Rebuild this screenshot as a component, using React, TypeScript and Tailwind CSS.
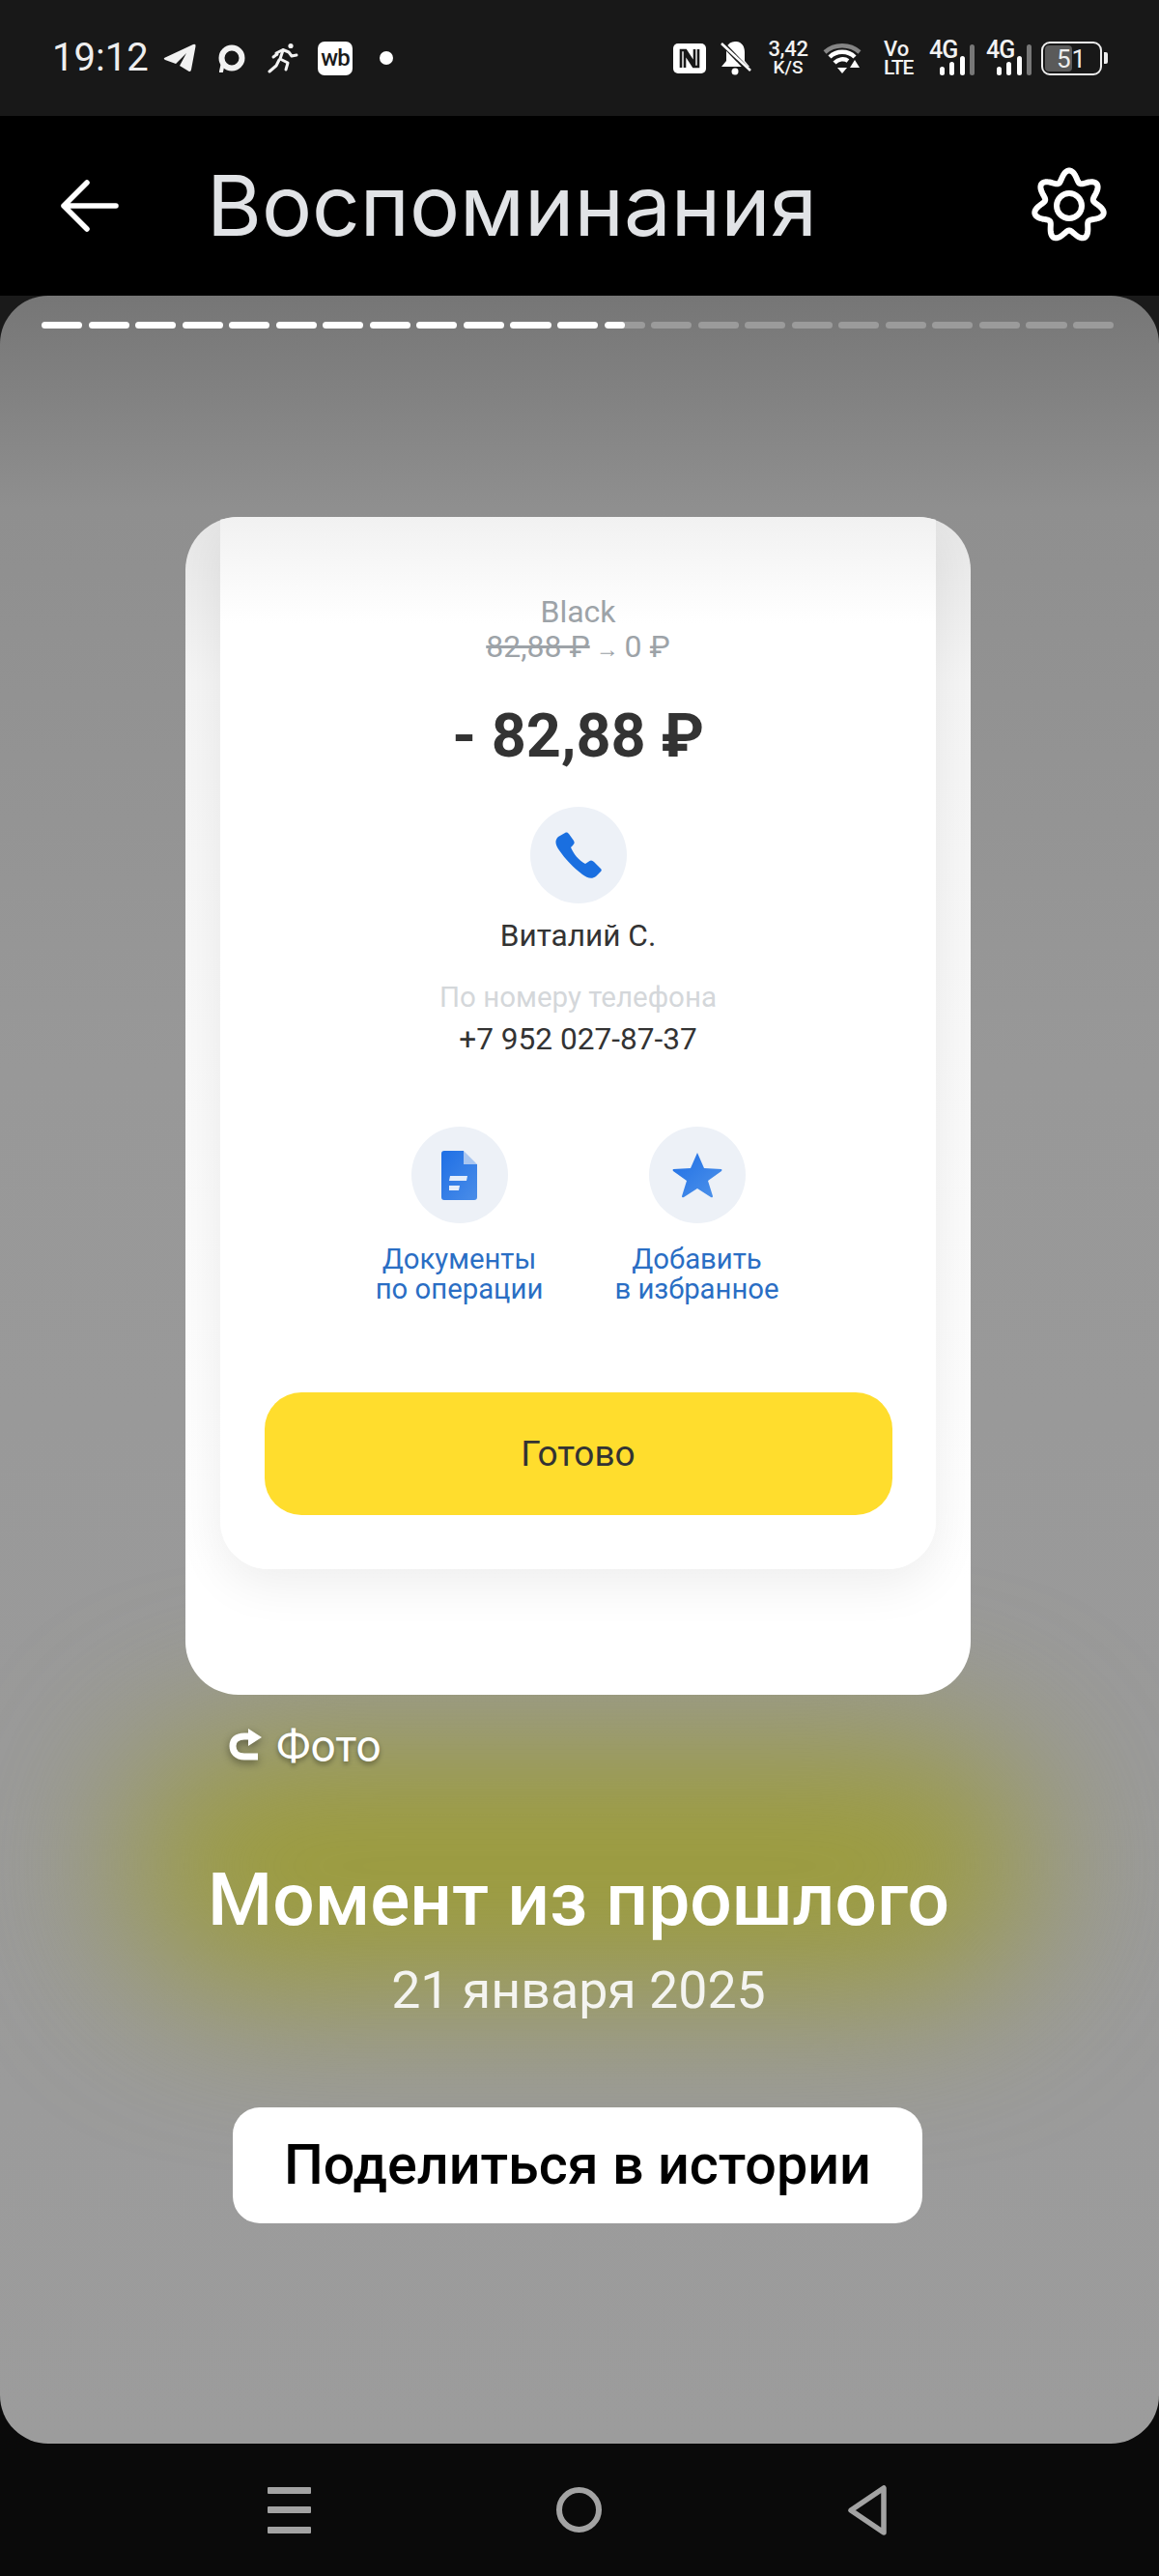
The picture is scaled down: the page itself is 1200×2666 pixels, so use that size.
import React from "react";

const segments = Array.from({ length: 23 }, (_, i) => i);

// 7 lobed gear outline, same as the one in the app header
function gearPath() {
  const pts: string[] = [];
  for (let i = 0; i <= 280; i++) {
    const a = (i / 280) * Math.PI * 2;
    const r = 31 + 5.5 * Math.cos(7 * a);
    pts.push(`${(40 + r * Math.sin(a)).toFixed(2)} ${(40 - r * Math.cos(a)).toFixed(2)}`);
  }
  return "M" + pts.join("L") + "Z";
}

function Telegram() {
  return (
    <svg width="34" height="30" viewBox="0 0 34 30" fill="#f2f2f2">
      <path d="M1 15 L31 1 Q34 0 33.5 3 L29 27 Q28.5 30 26 28.5 L17 23 L24 10 L13 21 L2 17 Q0 16 1 15Z" />
    </svg>
  );
}

function ChatRing() {
  return (
    <svg width="28" height="29" viewBox="0 0 28 29" fill="none">
      <path d="M3 28 L4.5 21" stroke="#f2f2f2" strokeWidth="4" strokeLinecap="round" />
      <circle cx="14" cy="14" r="10.5" stroke="#f2f2f2" strokeWidth="6" />
    </svg>
  );
}

function Runner() {
  return (
    <svg width="32" height="32" viewBox="0 0 32 32" fill="none" stroke="#f2f2f2" strokeWidth="3" strokeLinecap="round" strokeLinejoin="round">
      <circle cx="24" cy="3.5" r="2.6" fill="#f2f2f2" stroke="none" />
      <path d="M9 11 L16 7.5 L22 10 L25 14 L30 13" />
      <path d="M16 8 L13 17 L21 21 L19 28" />
      <path d="M12 18 L9 24 L2 30" />
      <path d="M6 15 L10 12" />
    </svg>
  );
}

function Nfc() {
  return (
    <svg width="34" height="31" viewBox="0 0 34 31">
      <rect width="34" height="31" rx="5" fill="#fff" />
      <path d="M8 25 V7 L13 7 L22 21 V6 M26 6 V24 L21 24 L12 10 V25" fill="none" stroke="#181818" strokeWidth="2.6" />
    </svg>
  );
}

function BellMuted() {
  return (
    <svg width="32" height="35" viewBox="0 0 32 35">
      <path d="M15 0 C22 0 25 5 25 11 V20 L30 26 H1 L6 20 V6 C8 2 11 0 15 0Z" fill="#fff" />
      <circle cx="15" cy="31" r="3.5" fill="#fff" />
      <path d="M1 1 L30 31" stroke="#181818" strokeWidth="5" />
      <path d="M1 2 L31 30" stroke="#fff" strokeWidth="2.6" />
    </svg>
  );
}

function Wifi() {
  return (
    <svg width="40" height="33" viewBox="0 0 40 33" fill="none" strokeWidth="4.4">
      <path d="M2 10 C12 1 28 1 38 10" stroke="#858585" />
      <path d="M7 15 C14 8 26 8 33 15" stroke="#fff" />
      <path d="M12 21 C16 17 22 16 26 19" stroke="#fff" />
      <path d="M15 26 H25 L20 32Z" fill="#fff" />
      <path d="M33 18 L38 26 H28Z" fill="#fff" />
    </svg>
  );
}

function Signal() {
  return (
    <div className="relative flex h-[36px] w-[47px] items-end justify-end gap-[5.5px]">
      <span className="absolute left-0 top-0 text-[25px] font-medium leading-[19px] tracking-[-1px] text-[#f2f2f2]">4G</span>
      <div className="h-[9px] w-[5px] rounded-full bg-white" />
      <div className="h-[14px] w-[5px] rounded-full bg-white" />
      <div className="h-[20px] w-[5px] rounded-full bg-white" />
      <div className="h-[32px] w-[5px] rounded-full bg-[#777]" />
    </div>
  );
}

function StatusBar() {
  return (
    <div className="flex h-[120px] shrink-0 items-center justify-between bg-[#181818] pl-[54px] pr-[53px]">
      <div className="flex items-center">
        <span className="w-[101px] text-[40px] leading-[48px] text-[#eee]">19:12</span>
        <div className="ml-[14px]"><Telegram /></div>
        <div className="ml-[23px]"><ChatRing /></div>
        <div className="ml-[23px]"><Runner /></div>
        <div className="ml-[20px] flex h-[35px] w-[36px] items-center justify-center rounded-[7px] bg-white">
          <span className="text-[24px] font-medium leading-none tracking-[-1px] text-[#1a1a1a]">wb</span>
        </div>
        <div className="ml-[28px] h-[14px] w-[14px] rounded-full bg-white" />
      </div>
      <div className="flex items-center">
        <Nfc />
        <div className="ml-[15px]"><BellMuted /></div>
        <div className="ml-[17px] flex w-[42px] flex-col items-center font-medium text-[#f2f2f2]">
          <span className="text-[22px] leading-[20px] tracking-[-0.3px]">3,42</span>
          <span className="text-[19px] leading-[18px]">K/S</span>
        </div>
        <div className="ml-[15px]"><Wifi /></div>
        <div className="ml-[23px] flex w-[33px] flex-col font-medium text-[#f2f2f2]">
          <span className="text-[22px] leading-[20px]">Vo</span>
          <span className="text-[21px] leading-[18px] tracking-[-1px]">LTE</span>
        </div>
        <div className="ml-[14px]"><Signal /></div>
        <div className="ml-[12px]"><Signal /></div>
        <div className="ml-[10px] flex items-center">
          <div className="relative flex h-[35px] w-[63px] items-center overflow-hidden rounded-[9px] border-2 border-[#eee]">
            <div className="ml-[2px] h-[27px] w-[28px] rounded-[4px] bg-[#5a5a5a]" />
            <span className="absolute left-[14px] top-[2px] text-[26px] leading-[28px] tracking-[1px] text-[#eee]">51</span>
          </div>
          <div className="ml-[2px] h-[12px] w-[4px] rounded-r-[2px] bg-[#eee]" />
        </div>
      </div>
    </div>
  );
}

function Header() {
  return (
    <div className="flex h-[186px] shrink-0 items-center justify-between bg-black pl-[63px] pr-[53px]">
      <div className="flex items-center">
        <svg width="60" height="54" viewBox="0 0 60 54" fill="none" stroke="#fff" strokeWidth="5.5" strokeLinecap="round" strokeLinejoin="round">
          <path d="M57 27 H3 M27 3 L3 27 L27 51" />
        </svg>
        <h1 className="ml-[91px] font-['Inter'] text-[87px] font-normal leading-[100px] text-[#e1e3e6]">Воспоминания</h1>
      </div>
      <svg width="80" height="80" viewBox="0 0 80 80" fill="none" stroke="#fff" strokeWidth="6">
        <path d={gearPath()} strokeLinejoin="round" />
        <circle cx="40" cy="40" r="13" />
      </svg>
    </div>
  );
}

function ProgressBar() {
  return (
    <div className="relative flex h-[7px] gap-[6.5px] pl-[43px] pr-[47px]">
      {segments.map((i) => (
        <div key={i} className={i < 12 ? "flex-1 rounded-full bg-white" : "flex-1 overflow-hidden rounded-full bg-[#9b9b9b]"}>
          {i === 12 && <div className="h-full w-[50%] rounded-full bg-white" />}
        </div>
      ))}
    </div>
  );
}

function PhoneIcon() {
  return (
    <svg width="48" height="48" viewBox="0 0 48 48" fill="#1a6fe0">
      <path d="M10 1 C12 0 13 1 14 2 L19 9 C20 11 20 12 18 14 L16 16 C19 23 24 29 31 33 L34 31 C36 29 38 29 40 31 L47 38 C48 39 48 40 47 41 L42 46 C38 49 33 48 28 44 C19 37 10 28 4 19 C0 13 -1 9 3 5 Z" />
    </svg>
  );
}

function DocIcon() {
  return (
    <svg width="37" height="51" viewBox="0 0 37 51">
      <defs>
        <linearGradient id="doc" x1="0" y1="0" x2="1" y2="1">
          <stop offset="0" stopColor="#1f6fe5" />
          <stop offset="1" stopColor="#4a8de8" />
        </linearGradient>
      </defs>
      <path d="M3 0 H23 V14 H37 V48 Q37 51 34 51 H3 Q0 51 0 48 V3 Q0 0 3 0Z" fill="url(#doc)" />
      <path d="M23 0 L37 14 H23Z" fill="#a9c6f0" />
      <path d="M9 26 H27 L26 31 H8Z M8 36 H19 L18 41 H8Z" fill="#e4edfa" />
    </svg>
  );
}

function StarIcon() {
  return (
    <svg width="52" height="47" viewBox="0 0 52 47">
      <defs>
        <linearGradient id="star" x1="0" y1="0" x2="1" y2="1">
          <stop offset="0" stopColor="#1f6fe5" />
          <stop offset="1" stopColor="#4f93ea" />
        </linearGradient>
      </defs>
      <path d="M26 0 L33 16 L51 17 Q52 18 51 19 L37 29 L42 45 Q42 47 40 46 L26 37 L12 46 Q10 47 10 45 L15 29 L1 19 Q0 18 1 17 L19 16Z" fill="url(#star)" />
    </svg>
  );
}

function ReceiptCard() {
  return (
    <div className="relative ml-[192px] h-[1219px] w-[813px] overflow-hidden rounded-[55px] bg-[linear-gradient(180deg,#e6e6e6_0,#f5f5f5_170px,#fff_1100px)]">
      <div className="mx-[36px] flex h-[1089px] w-[741px] flex-col items-center rounded-b-[50px] bg-[linear-gradient(180deg,#f1f1f1_0,#fff_110px)] pt-[80px] font-['Roboto'] shadow-[0_16px_50px_rgba(0,0,0,0.07)]">
        <p className="text-[32px] leading-[36px] text-[#9da3a8]">Black</p>
        <p className="text-[32px] leading-[36px] text-[#9da3a8]">
          <span className="line-through">82,88 ₽</span>
          <span className="text-[24px]"> → </span>0 ₽
        </p>
        <p className="mt-[36px] text-[63px] font-bold leading-[72px] text-[#333]">- 82,88 ₽</p>
        <div className="mt-[37px] flex h-[100px] w-[100px] items-center justify-center rounded-full bg-[#edf1f7]">
          <PhoneIcon />
        </div>
        <p className="mt-[15px] text-[31.6px] leading-[38px] text-[#333]">Виталий С.</p>
        <p className="mt-[26px] text-[29.5px] leading-[36px] text-[#d4d7da]">По номеру телефона</p>
        <p className="mt-[7px] text-[31.6px] leading-[38px] text-[#333]">+7 952 027-87-37</p>
        <div className="mt-[71px] flex gap-[26px]">
          <div className="flex w-[220px] flex-col items-center">
            <div className="flex h-[100px] w-[100px] items-center justify-center rounded-full bg-[#edf1f7]">
              <DocIcon />
            </div>
            <p className="mt-[22px] text-center text-[29.3px] leading-[31px] text-[#2a6ec4]">Документы<br />по операции</p>
          </div>
          <div className="flex w-[220px] flex-col items-center">
            <div className="flex h-[100px] w-[100px] items-center justify-center rounded-full bg-[#edf1f7]">
              <StarIcon />
            </div>
            <p className="mt-[22px] text-center text-[29.3px] leading-[31px] text-[#2a6ec4]">Добавить<br />в избранное</p>
          </div>
        </div>
        <button className="mt-[91px] flex h-[127px] w-[650px] shrink-0 items-center justify-center rounded-[38px] bg-[#ffdd2d] text-[37px] text-[#333]">Готово</button>
      </div>
    </div>
  );
}

function Memories() {
  return (
    <div className="relative h-[2223px] shrink-0 overflow-hidden rounded-t-[50px] rounded-b-[50px] bg-[linear-gradient(180deg,#767676_0,#8f8f8f_220px,#989898_800px,#9c9c9c_100%)] pt-[27px] font-['Roboto']">
      <div className="absolute left-[130px] top-[1495px] h-[260px] w-[940px] rounded-[130px] bg-[#9c9c3a] blur-[80px]" />
      <ProgressBar />
      <div className="mt-[195px]">
        <ReceiptCard />
      </div>
      <div className="relative mt-[30px] ml-[235px] flex h-[46px] items-center">
        <svg width="36" height="36" viewBox="0 0 36 36" fill="none" className="drop-shadow-[0_3px_4px_rgba(0,0,0,0.4)]">
          <path d="M32 29 H18 C10 29 6 24 6 18 C6 12 10 8 18 8 H24" stroke="#fff" strokeWidth="7" />
          <path d="M22 0 L36 9 L22 18Z" fill="#fff" />
        </svg>
        <span className="ml-[15px] text-[46px] leading-[46px] text-white [text-shadow:0_3px_5px_rgba(0,0,0,0.35)]">Фото</span>
      </div>
      <div className="relative flex flex-col items-center">
        <h2 className="mr-[2px] mt-[92px] text-[76.7px] font-medium leading-[88px] text-white">Момент из прошлого</h2>
        <p className="mr-[2px] mt-[19px] text-[53.7px] leading-[62px] text-[#f4f4f0]">21 января 2025</p>
        <button className="mr-[4px] mt-[90px] flex h-[120px] w-[714px] items-center justify-center rounded-[28px] bg-white text-[57.5px] font-medium text-black">Поделиться в истории</button>
      </div>
    </div>
  );
}

function NavBar() {
  return (
    <div className="flex flex-1 items-center pl-[277px]">
      <div className="flex w-[45px] flex-col gap-[13.5px]">
        <div className="h-[7px] rounded-[1px] bg-[#a3a3a3]" />
        <div className="h-[7px] rounded-[1px] bg-[#a3a3a3]" />
        <div className="h-[7px] rounded-[1px] bg-[#a3a3a3]" />
      </div>
      <div className="ml-[254px] h-[47px] w-[47px] rounded-full border-[6px] border-[#a3a3a3]" />
      <svg width="40" height="52" viewBox="0 0 40 52" fill="none" stroke="#a3a3a3" strokeWidth="5.5" strokeLinejoin="round" className="ml-[255px]">
        <path d="M37 3 V49 L3 26Z" />
      </svg>
    </div>
  );
}

export default function App() {
  return (
    <div className="flex h-[2666px] w-[1200px] flex-col overflow-hidden bg-[#0a0a0a] font-['Roboto']">
      <StatusBar />
      <Header />
      <div className="bg-[linear-gradient(180deg,#1a1a1a_0,#1a1a1a_200px,#0a0a0a_201px)]">
        <Memories />
      </div>
      <NavBar />
    </div>
  );
}
